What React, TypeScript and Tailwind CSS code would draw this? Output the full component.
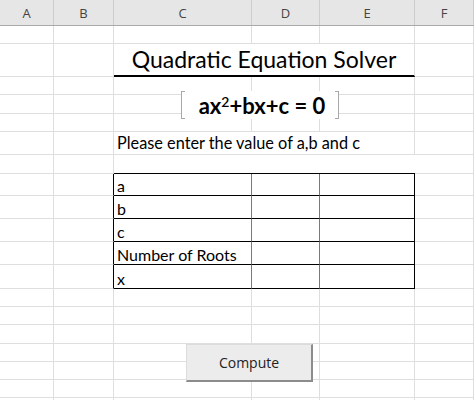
import React from 'react';

const grid = 'grid grid-cols-[54px_60px_138px_68px_95px_59px]';
const line = 'border-r border-b border-[#dedede]';
const font = { fontFamily: 'Lato, "Open Sans", sans-serif' };

const Blank = ({ h }: { h: string }) => (
  <div className={`${grid} ${h}`}>
    {[0, 1, 2, 3, 4, 5].map((i) => (
      <div key={i} className={line} />
    ))}
  </div>
);

const TableRow = ({ h, label }: { h: string; label: string }) => (
  <div className={`${grid} ${h}`}>
    <div className={line} />
    <div className="border-r border-black border-b border-b-[#dedede]" />
    <div className="border-r border-b border-r-[#7a7a7a] border-b-black flex items-end pl-[3px] pb-[1px] text-[16px] leading-none text-black">
      {label}
    </div>
    <div className="border-r border-b border-r-[#7a7a7a] border-b-black" />
    <div className="border-r border-b border-black" />
    <div className={line} />
  </div>
);

const App = () => {
  const headers = ['A', 'B', 'C', 'D', 'E', 'F'];
  return (
    <div className="relative w-[474px] h-[400px] overflow-hidden bg-white" style={font}>
      {/* column headers */}
      <div className={`${grid} h-[26px] bg-[#e6e6e6] border-b border-[#a9a9a9]`}>
        {headers.map((c) => (
          <div
            key={c}
            className="border-r border-[#cdcdcd] flex items-center justify-center text-[13px] text-[#444] pt-[2px]"
            style={{ fontFamily: '"Open Sans", sans-serif' }}
          >
            {c}
          </div>
        ))}
      </div>

      <Blank h="h-[18px]" />

      {/* title */}
      <div className={`${grid} h-[33px]`}>
        <div className={line} />
        <div className={line} />
        <div className="col-span-3 border-r border-r-[#dedede] border-b-2 border-b-black flex items-end justify-center pb-[4px] text-[23px] leading-none text-black whitespace-nowrap">
          Quadratic Equation Solver
        </div>
        <div className={line} />
      </div>

      <Blank h="h-[18px]" />
      <Blank h="h-[19px]" />
      <Blank h="h-[18px]" />

      {/* instructions */}
      <div className={`${grid} h-[23px]`}>
        <div className={line} />
        <div className={line} />
        <div className="col-span-3 border-r border-b border-[#dedede] flex items-end pl-[3px] pb-[3px] text-[16.3px] leading-none text-black whitespace-nowrap">
          Please enter the value of a,b and c
        </div>
        <div className={line} />
      </div>

      {/* row above table */}
      <div className={`${grid} h-[19px]`}>
        <div className={line} />
        <div className={line} />
        <div className="col-span-3 border-b border-black" />
        <div className={line} />
      </div>

      <TableRow h="h-[22px]" label="a" />
      <TableRow h="h-[23px]" label="b" />
      <TableRow h="h-[23px]" label="c" />
      <TableRow h="h-[23px]" label="Number of Roots" />
      <TableRow h="h-[24px]" label="x" />

      <Blank h="h-[18px]" />
      <Blank h="h-[18px]" />
      <Blank h="h-[19px]" />
      <Blank h="h-[18px]" />
      <Blank h="h-[18px]" />
      <Blank h="h-[18px]" />
      <Blank h="h-[18px]" />

      {/* equation object */}
      <div className="absolute left-[181px] top-[91px] w-[158px] h-[28px] bg-white flex items-center justify-center">
        <div className="absolute left-0 top-0 h-full w-[4px] border-l border-y border-[#a8a8a8]" />
        <div className="absolute right-0 top-0 h-full w-[4px] border-r border-y border-[#a8a8a8]" />
        <span className="text-[22px] font-bold text-black leading-none whitespace-nowrap pl-[4px] pt-[2px]">
          ax<sup className="text-[14px] font-semibold">2</sup>+bx+c = 0
        </span>
      </div>

      {/* button */}
      <button
        className="absolute left-[186px] top-[344px] w-[127px] h-[38px] bg-[#ececec] border border-[#dcdcdc] border-r-2 border-b-2 border-r-[#8c8c8c] border-b-[#8c8c8c] text-[14px] text-[#222] flex items-center justify-center"
        style={{ fontFamily: '"Open Sans", sans-serif' }}
      >
        Compute
      </button>
    </div>
  );
};

export default App;
